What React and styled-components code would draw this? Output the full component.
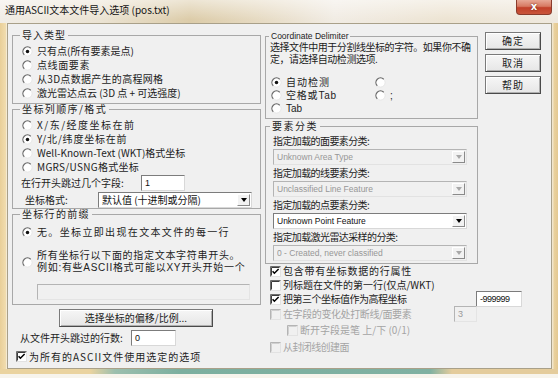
import React from "react";
import styled, { createGlobalStyle } from "styled-components";

const GlobalStyle = createGlobalStyle`
  html, body { margin: 0; padding: 0; background: #ffffff; }
  body { font-family: "Noto Sans CJK SC", "Liberation Sans", sans-serif; color: #1c1c1c; }
  * { box-sizing: border-box; }
`;

const compactFont = '"Liberation Sans", "Noto Sans CJK SC", sans-serif';

const Window = styled.div`
  width: 558px;
  height: 378px;
  display: flex;
  flex-direction: column;
  background: #ead39f;
  overflow: hidden;
`;

const TitleBar = styled.div`
  height: 23px;
  display: flex;
  align-items: flex-start;
  background:
    linear-gradient(180deg, rgba(255, 255, 255, 0.5), rgba(255, 255, 255, 0) 85%),
    linear-gradient(90deg, #f1ede6 0%, #ebe3d3 18%, #dccca9 34%, #e6dac2 46%, #f1ece4 60%, #ede4d3 80%, #efe9df 100%);
`;

const TitleText = styled.span`
  margin: 3px 0 0 5px;
  font-size: 10px;
  line-height: 13px;
  color: #141414;
  white-space: nowrap;
`;

const CloseButton = styled.div`
  margin-left: auto;
  margin-right: 6px;
  width: 36px;
  height: 15px;
  border: 1px solid #8a3b2c;
  border-top: none;
  border-radius: 0 0 4px 4px;
  background: linear-gradient(180deg, #e7a896 0%, #d77a63 45%, #c2412a 55%, #c9553c 100%);
  color: #fff;
  font-family: "DejaVu Sans", sans-serif;
  font-weight: bold;
  font-size: 10px;
  line-height: 14px;
  text-align: center;
  text-shadow: 0 0 2px #5a1a10;
`;

const Middle = styled.div`
  display: flex;
  height: 346px;
`;

const SideFrame = styled.div`
  width: ${(p) => p.$w}px;
  background: ${(p) => p.$bg};
`;

const Client = styled.div`
  flex: 1;
  background: #f0f0f0;
  border: 1px solid #a9a089;
  display: flex;
  align-items: flex-start;
  gap: 4px;
  padding: 5px 0 0 4px;
`;

const BottomFrame = styled.div`
  height: 9px;
  background:
    linear-gradient(180deg, rgba(250, 250, 247, 0) 0 5px, #f7f4ec 5px),
    linear-gradient(90deg, #ead39f 0 90px, #9cbfae 115px, #7caf9f 180px, #80b1a2 430px, #e4cc9c 452px);
`;

const LeftColumn = styled.div`
  width: 249px;
  display: flex;
  flex-direction: column;
`;

const RightArea = styled.div`
  margin-top: 1px;
  display: flex;
  flex-direction: column;
`;

const TopRow = styled.div`
  display: flex;
  align-items: flex-start;
  gap: 7px;
`;

const GroupColumn = styled.div`
  width: 213px;
  display: flex;
  flex-direction: column;
`;

const GroupBox = styled.fieldset`
  margin: ${(p) => p.$mt || 0}px 0 0;
  padding: 0;
  min-width: 0;
  height: ${(p) => p.$h}px;
  border: 1px solid #a8a8a8;
`;

const Legend = styled.legend`
  margin-left: ${(p) => p.$ml}px;
  padding: 0 2px;
  font-size: ${(p) => p.$fs || 10}px;
  font-family: ${(p) => (p.$latin ? '"Liberation Sans", sans-serif' : "inherit")};
  letter-spacing: ${(p) => p.$ls || 0}px;
  line-height: 12px;
  white-space: nowrap;
`;

const GroupBody = styled.div`
  display: flex;
  flex-direction: column;
  padding: ${(p) => p.$pt}px 0 0 ${(p) => p.$pl}px;
`;

const OptionRow = styled.div`
  display: flex;
  align-items: center;
  gap: 4px;
  height: ${(p) => p.$h}px;
  margin-top: ${(p) => p.$mt || 0}px;
  font-size: 10px;
  font-family: ${(p) => (p.$compact ? compactFont : "inherit")};
  letter-spacing: ${(p) => p.$ls || 0}px;
  white-space: nowrap;
  color: ${(p) => (p.$disabled ? "#a2a2a2" : "#1c1c1c")};
  svg { flex: none; }
`;

const OptionText = styled.span`
  line-height: ${(p) => p.$lh}px;
`;

const FieldRow = styled.div`
  display: flex;
  align-items: center;
  height: ${(p) => p.$h}px;
  margin-top: ${(p) => p.$mt || 0}px;
  padding-left: ${(p) => p.$pl || 0}px;
`;

const FieldLabel = styled.span`
  width: ${(p) => p.$w}px;
  flex: none;
  font-size: 10px;
  line-height: 14px;
  letter-spacing: ${(p) => p.$ls || 0}px;
  white-space: nowrap;
`;

const TextBox = styled.div`
  width: ${(p) => p.$w}px;
  height: 16px;
  margin-top: ${(p) => p.$mt || 0}px;
  margin-left: ${(p) => p.$ml || 0}px;
  margin-right: ${(p) => p.$mr || 0}px;
  flex: none;
  background: ${(p) => (p.$disabled ? "#f0f0f0" : "#ffffff")};
  border: 1px solid;
  border-color: ${(p) => (p.$disabled ? "#b4b4b4 #e4e4e4 #e4e4e4 #b4b4b4" : "#7c7c7c #d8d8d8 #d8d8d8 #7c7c7c")};
  padding-left: 3px;
  font-family: "Liberation Sans", sans-serif;
  font-size: 9px;
  line-height: 14px;
  color: ${(p) => (p.$disabled ? "#9a9a9a" : "#111")};
`;

const Dropdown = styled.div`
  width: ${(p) => p.$w}px;
  height: 16px;
  flex: none;
  display: flex;
  align-items: center;
  background: ${(p) => (p.$disabled ? "#f0f0f0" : "#ffffff")};
  border: 1px solid;
  border-color: ${(p) => (p.$disabled ? "#b4b4b4 #e2e2e2 #e2e2e2 #b4b4b4" : "#7c7c7c #d8d8d8 #d8d8d8 #7c7c7c")};
  padding-left: 3px;
  font-size: ${(p) => (p.$latin ? 8.5 : 10)}px;
  line-height: 14px;
  font-family: ${(p) => (p.$latin ? '"Liberation Sans", sans-serif' : "inherit")};
  color: ${(p) => (p.$disabled ? "#979797" : "#111")};
  white-space: nowrap;
`;

const DropValue = styled.span`
  flex: 1;
  overflow: hidden;
`;

const DropArrow = styled.span`
  width: 13px;
  height: 12px;
  margin-right: 1px;
  display: flex;
  align-items: center;
  justify-content: center;
  border: 1px solid;
  border-color: #ffffff #8a8a8a #8a8a8a #ffffff;
  background: #f2f2f2;
  &::after {
    content: "";
    border-left: 3.5px solid transparent;
    border-right: 3.5px solid transparent;
    border-top: 4px solid ${(p) => (p.$disabled ? "#a8a8a8" : "#000")};
  }
`;

const PushButton = styled.div`
  width: ${(p) => p.$w}px;
  height: 18px;
  margin-top: ${(p) => p.$mt || 0}px;
  margin-left: ${(p) => p.$ml || 0}px;
  display: flex;
  align-items: center;
  justify-content: center;
  border: 1px solid #7a7a7a;
  border-right-color: #4a4a4a;
  border-bottom-color: #4a4a4a;
  box-shadow: inset 1px 1px 0 #ffffff, inset -1px -1px 0 #b0b0b0;
  background: linear-gradient(180deg, #f6f6f6, #e6e6e6);
  font-size: 10px;
  line-height: 14px;
  letter-spacing: ${(p) => p.$ls || 0}px;
  white-space: nowrap;
`;

const ButtonColumn = styled.div`
  margin-top: 2px;
  display: flex;
  flex-direction: column;
  gap: 4px;
`;

const Description = styled.div`
  padding-left: 4px;
  font-family: ${compactFont};
  font-size: 10px;
  line-height: 12px;
  letter-spacing: -0.45px;
  white-space: nowrap;
`;

const DelimGrid = styled.div`
  margin-top: 10px;
  padding-left: 5px;
  display: grid;
  grid-template-columns: 104px auto;
`;

const ClassLabel = styled.div`
  height: 13px;
  margin-top: ${(p) => p.$mt || 0}px;
  margin-bottom: 2px;
  font-size: 10px;
  line-height: 13px;
  letter-spacing: -0.6px;
  white-space: nowrap;
`;

const CheckList = styled.div`
  width: 257px;
  padding-left: 5px;
  display: flex;
  flex-direction: column;
`;

const CheckRow = styled.div`
  display: flex;
  align-items: center;
  gap: 2px;
  height: ${(p) => p.$h}px;
  margin-top: ${(p) => p.$mt || 0}px;
  padding-left: ${(p) => p.$pl || 0}px;
  margin-left: ${(p) => p.$ml || 0}px;
  font-size: 10px;
  line-height: ${(p) => p.$h}px;
  letter-spacing: ${(p) => p.$ls || 0}px;
  white-space: nowrap;
  color: ${(p) => (p.$disabled ? "#a4a4a4" : "#1c1c1c")};
  svg { flex: none; }
`;

const CheckText = styled.span`
  flex: 1;
`;

const RadioMark = ({ checked, disabled }) => (
  <svg width="11" height="11" viewBox="0 0 12 12">
    <circle cx="6" cy="6" r="5" fill={disabled ? "#f0f0f0" : "#ffffff"} stroke="#e6e6e6" strokeWidth="1" />
    <path d="M9.54 2.46 A5 5 0 0 0 2.46 9.54" fill="none" stroke={disabled ? "#b0b0b0" : "#6a6a6a"} strokeWidth="1.3" />
    {checked && <circle cx="6" cy="6" r="1.9" fill="#111" />}
  </svg>
);

const CheckMark = ({ checked, disabled }) => (
  <svg width="11" height="11" viewBox="0 0 11 11">
    <rect x="0.5" y="0.5" width="10" height="10" fill={disabled ? "#f0f0f0" : "#ffffff"} stroke="#e2e2e2" />
    <path d="M0.5 10.5 V0.5 H10.5" fill="none" stroke={disabled ? "#b4b4b4" : "#6e6e6e"} />
    <path d="M1.5 9.5 V1.5 H9.5" fill="none" stroke={disabled ? "#d0d0d0" : "#3c3c3c"} />
    {checked && <path d="M2.6 5.2 L4.4 7.2 L8.6 3" fill="none" stroke="#000" strokeWidth="1.5" />}
  </svg>
);

const Option = ({ checked, disabled, ls, h = 14, mt, lh, compact, children }) => (
  <OptionRow $h={h} $ls={ls} $mt={mt} $disabled={disabled} $compact={compact}>
    <RadioMark checked={checked} disabled={disabled} />
    <OptionText $lh={lh || h}>{children}</OptionText>
  </OptionRow>
);

const Check = ({ checked, disabled, ls, h = 14, mt, pl, children, extra }) => (
  <CheckRow $h={h} $ls={ls} $mt={mt} $pl={pl} $disabled={disabled}>
    <CheckMark checked={checked} disabled={disabled} />
    <CheckText>{children}</CheckText>
    {extra}
  </CheckRow>
);

const Select = ({ w, value, disabled, latin }) => (
  <Dropdown $w={w} $disabled={disabled} $latin={latin}>
    <DropValue>{value}</DropValue>
    <DropArrow $disabled={disabled} />
  </Dropdown>
);

const classes = [
  { label: "指定加载的面要素分类:", value: "Unknown Area Type", disabled: true },
  { label: "指定加载的线要素分类:", value: "Unclassified Line Feature", disabled: true },
  { label: "指定加载的点要素分类:", value: "Unknown Point Feature", disabled: false },
  { label: "指定加载激光雷达采样的分类:", value: "0 - Created, never classified", disabled: true },
];

export default function App() {
  return (
    <Window>
      <GlobalStyle />
      <TitleBar>
        <TitleText>通用ASCII文本文件导入选项 (pos.txt)</TitleText>
        <CloseButton>x</CloseButton>
      </TitleBar>
      <Middle>
        <SideFrame $w={7} $bg="linear-gradient(90deg, #e9cf98, #f1dcae 80%, #f7f2e6)" />
        <Client>
          <LeftColumn>
            <GroupBox $h={75}>
              <Legend $ml={7} $ls={1}>导入类型</Legend>
              <GroupBody $pt={3} $pl={9}>
                <Option checked>只有点(所有要素是点)</Option>
                <Option ls={0.6}>点线面要素</Option>
                <Option ls={0.3}>从3D点数据产生的高程网格</Option>
                <Option>激光雷达点云 (3D 点 + 可选强度)</Option>
              </GroupBody>
            </GroupBox>
            <GroupBox $h={106} $mt={-1}>
              <Legend $ml={7} $ls={1.4}>坐标列顺序/格式</Legend>
              <GroupBody $pt={3} $pl={9}>
                <Option ls={1.5}>X/东/经度坐标在前</Option>
                <Option checked ls={0.8}>Y/北/纬度坐标在前</Option>
                <Option>Well-Known-Text (WKT)格式坐标</Option>
                <Option ls={0.3}>MGRS/USNG格式坐标</Option>
              </GroupBody>
              <FieldRow $h={16} $mt={1} $pl={8}>
                <FieldLabel $w={120}>在行开头跳过几个字段:</FieldLabel>
                <TextBox $w={44}>1</TextBox>
              </FieldRow>
              <FieldRow $h={16} $mt={1} $pl={12}>
                <FieldLabel $w={73}>坐标格式:</FieldLabel>
                <Select w={154} value="默认值 (十进制或分隔)" />
              </FieldRow>
            </GroupBox>
            <GroupBox $h={97} $mt={-1}>
              <Legend $ml={7} $ls={1.3}>坐标行的前缀</Legend>
              <GroupBody $pt={5} $pl={9}>
                <Option checked ls={1.35}>无。坐标立即出现在文本文件的每一行</Option>
                <Option h={24} mt={11} ls={0.7} lh={12} compact>
                  所有坐标行以下面的指定文本字符串开头。
                  <br />
                  例如:有些ASCII格式可能以XY开头开始一个
                </Option>
                <TextBox $w={213} $ml={15} $mt={10} $disabled />
              </GroupBody>
            </GroupBox>
            <PushButton $w={154} $ml={47} $mt={4}>选择坐标的偏移/比例...</PushButton>
            <FieldRow $h={16} $mt={3} $pl={8}>
              <FieldLabel $w={111}>从文件开头跳过的行数:</FieldLabel>
              <TextBox $w={45}>0</TextBox>
            </FieldRow>
            <CheckRow $h={13} $mt={4} $ml={4} $ls={1}>
              <CheckMark checked />
              <CheckText>为所有的ASCII文件使用选定的选项</CheckText>
            </CheckRow>
          </LeftColumn>
          <RightArea>
            <TopRow>
              <GroupColumn>
                <GroupBox $h={89}>
                  <Legend $ml={3} $fs={8.5} $latin>Coordinate Delimiter</Legend>
                  <Description>
                    选择文件中用于分割线坐标的字符。如果你不确
                    <br />
                    定，请选择自动检测选项.
                  </Description>
                  <DelimGrid>
                    <Option h={13} checked ls={1} compact>自动检测</Option>
                    <Option h={13} compact></Option>
                    <Option h={13} ls={0.8} compact>空格或Tab</Option>
                    <Option h={13} compact>;</Option>
                    <Option h={13} compact>Tab</Option>
                  </DelimGrid>
                </GroupBox>
                <GroupBox $h={144} $mt={1}>
                  <Legend $ml={4} $ls={1.5}>要素分类</Legend>
                  <GroupBody $pt={2} $pl={7}>
                    {classes.map((c, i) => (
                      <React.Fragment key={c.label}>
                        <ClassLabel $mt={i ? 1 : 0}>{c.label}</ClassLabel>
                        <Select w={194} value={c.value} disabled={c.disabled} latin />
                      </React.Fragment>
                    ))}
                  </GroupBody>
                </GroupBox>
              </GroupColumn>
              <ButtonColumn>
                <PushButton $w={56} $ls={1}>确定</PushButton>
                <PushButton $w={56} $ls={1}>取消</PushButton>
                <PushButton $w={56} $ls={1}>帮助</PushButton>
              </ButtonColumn>
            </TopRow>
            <CheckList>
              <Check checked ls={0.75}>包含带有坐标数据的行属性</Check>
              <Check>列标题在文件的第一行(仅点/WKT)</Check>
              <Check checked ls={-0.5} extra={<TextBox $w={46}>-999999</TextBox>}>
                把第三个坐标值作为高程坐标
              </Check>
              <Check disabled h={16} ls={-0.4} extra={<TextBox $w={23} $mr={45} $disabled>3</TextBox>}>
                在字段的变化处打断线/面要素
              </Check>
              <Check disabled h={16} pl={17}>断开字段是笔 上/下 (0/1)</Check>
              <Check disabled h={14} mt={2} ls={-0.6}>从封闭线创建面</Check>
            </CheckList>
          </RightArea>
        </Client>
        <SideFrame $w={6} $bg="linear-gradient(90deg, #f4ecd8, #e9d09c 40%, #e3c890)" />
      </Middle>
      <BottomFrame />
    </Window>
  );
}
